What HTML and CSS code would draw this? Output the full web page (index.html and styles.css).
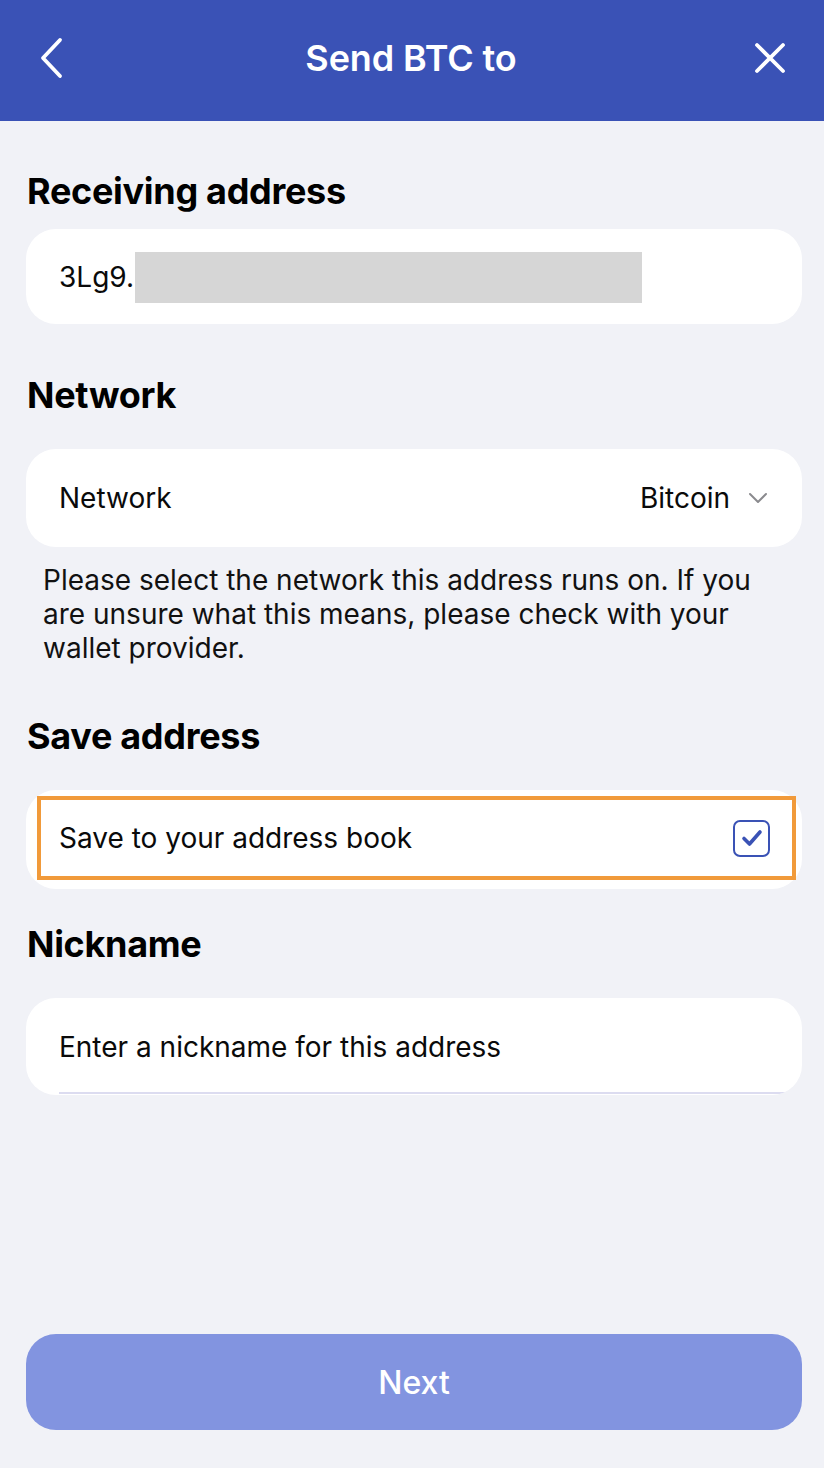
FILE: index.html
```html
<!DOCTYPE html>
<html lang="en">
<head>
    <meta charset="UTF-8">
    <meta name="viewport" content="width=device-width, initial-scale=1.0">
    <title>Send BTC to</title>
    <link rel="stylesheet" href="styles.css">
</head>
<body>
    <div class="app">
        <!-- Cabeçalho -->
        <header class="topbar">
            <button class="icon-btn" aria-label="Back">
                <svg width="28" height="44" viewBox="0 0 28 44"><path d="M22 4 L5 22 L22 40" fill="none" stroke="#fff" stroke-width="3.8" stroke-linecap="round" stroke-linejoin="round"/></svg>
            </button>
            <h1 class="title">Send BTC to</h1>
            <button class="icon-btn" aria-label="Close">
                <svg width="32" height="32" viewBox="0 0 32 32"><path d="M3 3 L29 29 M29 3 L3 29" fill="none" stroke="#fff" stroke-width="3.8" stroke-linecap="round"/></svg>
            </button>
        </header>

        <main class="content">
            <h2 class="section-title first">Receiving address</h2>
            <div class="card card-address">
                <span>3Lg9.</span>
                <span class="redacted"></span>
            </div>

            <h2 class="section-title">Network</h2>
            <div class="card card-row">
                <span>Network</span>
                <span class="select-value">Bitcoin
                    <svg width="20" height="12" viewBox="0 0 20 12"><path d="M2 2 L10 10 L18 2" fill="none" stroke="#8a8a8e" stroke-width="2" stroke-linecap="round" stroke-linejoin="round"/></svg>
                </span>
            </div>
            <p class="hint">Please select the network this address runs on. If you are unsure what this means, please check with your wallet provider.</p>

            <h2 class="section-title">Save address</h2>
            <div class="card card-save">
                <div class="highlight">
                    <span>Save to your address book</span>
                    <span class="checkbox">
                        <svg width="22" height="18" viewBox="0 0 22 18"><path d="M3 9.5 L8.5 15 L19 3" fill="none" stroke="#3a52b5" stroke-width="3.6" stroke-linecap="round" stroke-linejoin="round"/></svg>
                    </span>
                </div>
            </div>

            <h2 class="section-title tight">Nickname</h2>
            <div class="card card-input">
                <span>Enter a nickname for this address</span>
            </div>
        </main>

        <footer class="footer">
            <button class="btn-next">Next</button>
        </footer>
    </div>
</body>
</html>
```

FILE: styles.css
```css
/* Reset */
* {
    margin: 0;
    padding: 0;
    box-sizing: border-box;
}

body {
    font-family: 'Inter', 'Noto Sans', sans-serif;
    background-color: #f1f2f7;
    color: #0a0a0a;
}

.app {
    width: 824px;
    height: 1468px;
    display: flex;
    flex-direction: column;
}

/* Cabeçalho */
.topbar {
    height: 121px;
    background-color: #3a52b6;
    display: flex;
    align-items: center;
    justify-content: space-between;
    padding: 0 38px 6px 36px;
}

.icon-btn {
    background: none;
    border: none;
    width: 32px;
    display: flex;
    justify-content: center;
}

.title {
    color: #fff;
    font-size: 36px;
    font-weight: 600;
    letter-spacing: -0.1px;
}

/* Conteúdo */
.content {
    flex: 1;
    padding: 0 22px 0 26px;
}

.section-title {
    font-size: 36px;
    font-weight: 700;
    letter-spacing: -0.3px;
    line-height: 40px;
    margin: 51px 0 34px 1px;
    color: #000;
}

.section-title.first {
    margin-top: 50px;
    margin-bottom: 18px;
}

.section-title.tight {
    margin-top: 35px;
}

.card {
    background-color: #fff;
    border-radius: 30px;
    height: 95px;
    display: flex;
    align-items: center;
    padding: 0 33px;
    font-size: 28px;
}

.card-address .redacted {
    width: 507px;
    height: 51px;
    background-color: #d6d6d6;
    margin-top: 2px;
    margin-left: 1px;
}

.card-row {
    justify-content: space-between;
    height: 98px;
    padding-right: 34px;
}

.select-value {
    display: flex;
    align-items: center;
    gap: 18px;
}

.hint {
    font-size: 28px;
    line-height: 34px;
    padding: 16px 16px 0 17px;
    color: #111;
}

/* Caixa destacada */
.card-save {
    height: 99px;
    padding: 6px 6px 9px 11px;
    align-items: stretch;
}

.highlight {
    flex: 1;
    border: 4px solid #f19a3a;
    display: flex;
    align-items: center;
    justify-content: space-between;
    padding: 0 22px 0 18px;
}

.checkbox {
    width: 37px;
    height: 37px;
    border: 2px solid #3a52b5;
    border-radius: 7px;
    display: flex;
    align-items: center;
    justify-content: center;
}

.card-input {
    height: 97px;
    position: relative;
    overflow: hidden;
}

.card-input::after {
    content: "";
    position: absolute;
    left: 33px;
    right: 0;
    bottom: 1px;
    height: 2px;
    background-color: #dcdcf0;
}

/* Botão */
.footer {
    padding: 0 22px 38px 26px;
}

.btn-next {
    width: 100%;
    height: 96px;
    border: none;
    border-radius: 30px;
    background-color: #8294e0;
    color: #fff;
    font-family: inherit;
    font-size: 32px;
    font-weight: 500;
}
```
